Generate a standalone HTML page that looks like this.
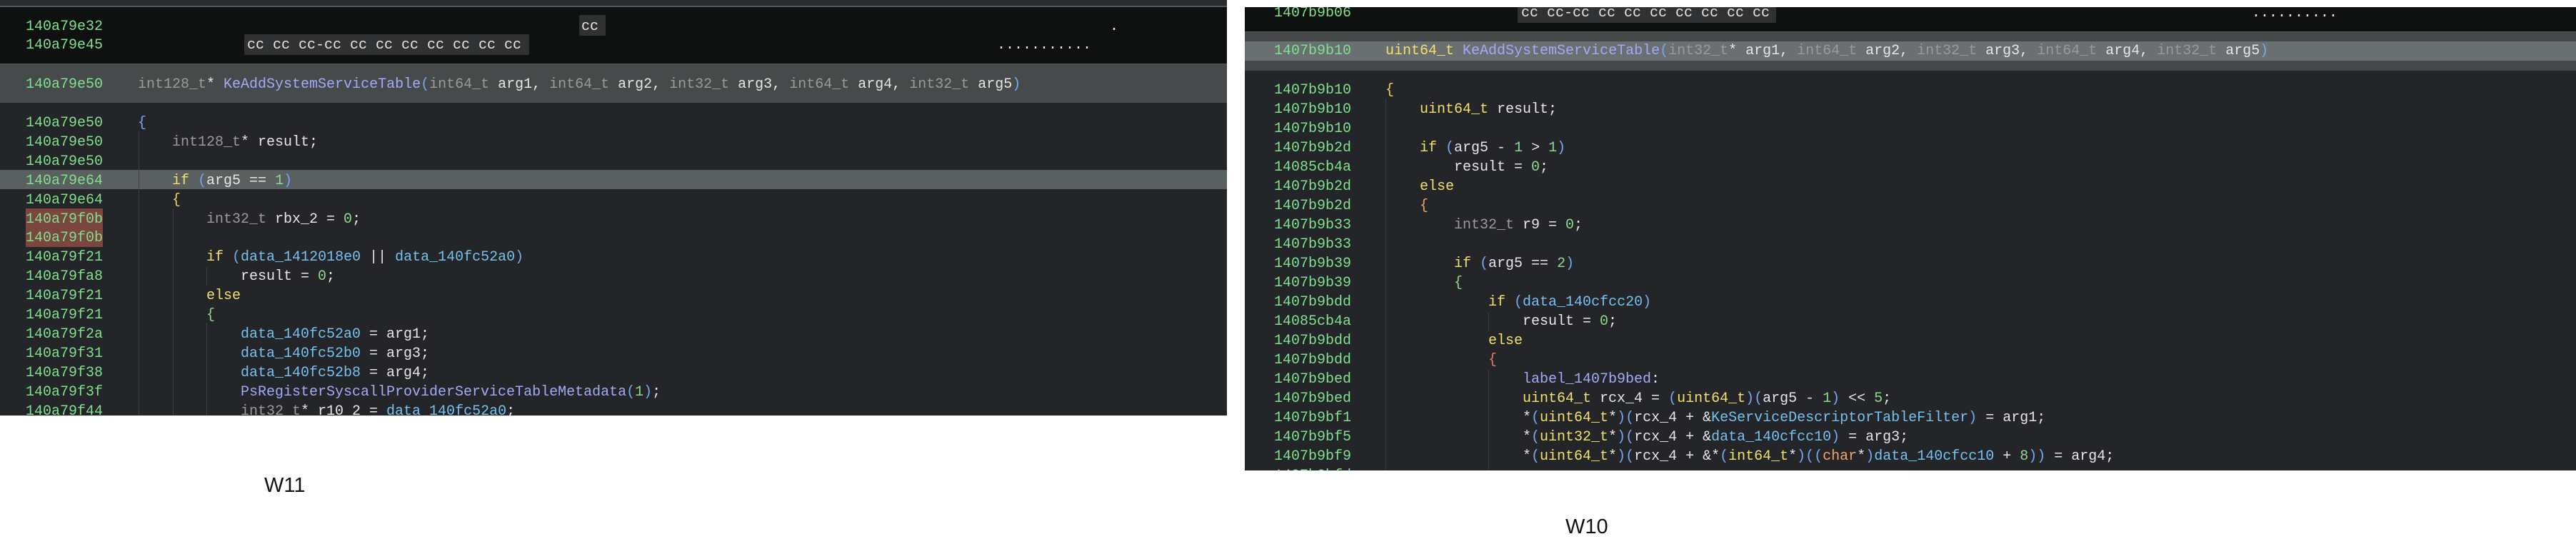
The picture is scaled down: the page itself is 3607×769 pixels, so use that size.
<!DOCTYPE html>
<html><head><meta charset="utf-8"><style>
body{margin:0;width:3607px;height:769px;background:#fff;position:relative;overflow:hidden;font-family:"Liberation Mono",monospace;font-size:20px}
.p{position:absolute;overflow:hidden}
.r{position:absolute;left:0;right:0;height:27px;line-height:27px;white-space:pre}
.a{position:absolute;color:#7fe08d}
.c{position:absolute;color:#e6e6e6}
.t{color:#9a9a9a}.f{color:#a3aaf7}.k{color:#f2e06a}.n{color:#8fd98f}.d{color:#74c2ef}.y{color:#f2e06a}.o{color:#f3a46a}
.b1{color:#74a8ef}.b2{color:#f2d06a}.b3{color:#8fd98f}.b4{color:#e8776a}
.g{position:absolute;width:1px;background:#3c3e42}
.box{position:absolute;background:#2f3133;border-radius:2px}
.lab{position:absolute;font-family:"Liberation Sans",sans-serif;font-size:29px;color:#111}
</style></head><body>

<!-- LEFT PANEL -->
<div class="p" style="left:0;top:0;width:1718px;height:582px;background:#242528">
 <div style="position:absolute;left:0;top:0;right:0;height:8px;background:#2a2b2e"></div>
 <div style="position:absolute;left:0;top:8px;right:0;height:2px;background:#55585a"></div>
 <div style="position:absolute;left:0;top:10px;right:0;height:79px;background:#0f1110"></div>
 <div style="position:absolute;left:0;top:89px;right:0;height:55px;background:#474a4b"></div>
 <div style="position:absolute;left:0;top:89px;right:0;height:1px;background:#5a5d5e"></div>
 <div style="position:absolute;left:0;top:238px;right:0;height:27px;background:#5a5f5f"></div>
 <div style="position:absolute;left:36px;top:292px;width:108px;height:54px;background:#7a463f"></div>
 <div class="box" style="left:811px;top:21px;width:37px;height:29px"></div>
 <div class="box" style="left:342px;top:48px;width:399px;height:29px"></div>
 <div class="g" style="left:194px;top:185px;height:400px"></div>
 <div class="g" style="left:242px;top:292px;height:300px"></div>
 <div class="g" style="left:289px;top:374px;height:26px"></div>
 <div class="g" style="left:289px;top:452px;height:140px"></div>

 <div class="r" style="top:24px"><span class="a" style="left:36px">140a79e32</span><span class="c" style="left:814px">cc</span><span class="c" style="left:1554px">.</span></div>
 <div class="r" style="top:50px"><span class="a" style="left:36px">140a79e45</span><span class="c" style="left:346px">cc cc cc-cc cc cc cc cc cc cc cc</span><span class="c" style="left:1396px">...........</span></div>
 <div class="r" style="top:105px"><span class="a" style="left:36px">140a79e50</span><span class="c" style="left:193px"><span class="t">int128_t</span>* <span class="f">KeAddSystemServiceTable</span><span class="b1">(</span><span class="t">int64_t</span> arg1, <span class="t">int64_t</span> arg2, <span class="t">int32_t</span> arg3, <span class="t">int64_t</span> arg4, <span class="t">int32_t</span> arg5<span class="b1">)</span></span></div>

 <div class="r" style="top:159px"><span class="a" style="left:36px">140a79e50</span><span class="c" style="left:193px"><span class="b1">{</span></span></div>
 <div class="r" style="top:186px"><span class="a" style="left:36px">140a79e50</span><span class="c" style="left:241px"><span class="t">int128_t</span>* result;</span></div>
 <div class="r" style="top:213px"><span class="a" style="left:36px">140a79e50</span></div>
 <div class="r" style="top:240px"><span class="a" style="left:36px">140a79e64</span><span class="c" style="left:241px"><span class="k">if</span> <span class="b1">(</span>arg5 == <span class="n">1</span><span class="b1">)</span></span></div>
 <div class="r" style="top:267px"><span class="a" style="left:36px">140a79e64</span><span class="c" style="left:241px"><span class="b2">{</span></span></div>
 <div class="r" style="top:294px"><span class="a" style="left:36px">140a79f0b</span><span class="c" style="left:289px"><span class="t">int32_t</span> rbx_2 = <span class="n">0</span>;</span></div>
 <div class="r" style="top:320px"><span class="a" style="left:36px">140a79f0b</span></div>
 <div class="r" style="top:347px"><span class="a" style="left:36px">140a79f21</span><span class="c" style="left:289px"><span class="k">if</span> <span class="b1">(</span><span class="d">data_1412018e0</span> || <span class="d">data_140fc52a0</span><span class="b1">)</span></span></div>
 <div class="r" style="top:374px"><span class="a" style="left:36px">140a79fa8</span><span class="c" style="left:337px">result = <span class="n">0</span>;</span></div>
 <div class="r" style="top:401px"><span class="a" style="left:36px">140a79f21</span><span class="c" style="left:289px"><span class="k">else</span></span></div>
 <div class="r" style="top:428px"><span class="a" style="left:36px">140a79f21</span><span class="c" style="left:289px"><span class="b3">{</span></span></div>
 <div class="r" style="top:455px"><span class="a" style="left:36px">140a79f2a</span><span class="c" style="left:337px"><span class="d">data_140fc52a0</span> = arg1;</span></div>
 <div class="r" style="top:482px"><span class="a" style="left:36px">140a79f31</span><span class="c" style="left:337px"><span class="d">data_140fc52b0</span> = arg3;</span></div>
 <div class="r" style="top:509px"><span class="a" style="left:36px">140a79f38</span><span class="c" style="left:337px"><span class="d">data_140fc52b8</span> = arg4;</span></div>
 <div class="r" style="top:536px"><span class="a" style="left:36px">140a79f3f</span><span class="c" style="left:337px"><span class="f">PsRegisterSyscallProviderServiceTableMetadata</span><span class="b1">(</span><span class="n">1</span><span class="b1">)</span>;</span></div>
 <div class="r" style="top:563px"><span class="a" style="left:36px">140a79f44</span><span class="c" style="left:337px"><span class="t">int32_t</span>* r10_2 = <span class="d">data_140fc52a0</span>;</span></div>
</div>
<div class="lab" style="left:370px;top:664px">W11</div>

<!-- RIGHT PANEL -->
<div class="p" style="left:1743px;top:10px;width:1864px;height:649px;background:#242528">
 <div style="position:absolute;left:0;top:0;right:0;height:34px;background:#0f1110"></div>
 <div style="position:absolute;left:0;top:34px;right:0;height:55px;background:#454849"></div>
 <div style="position:absolute;left:0;top:34px;right:0;height:1px;background:#5a5d5e"></div>
 <div style="position:absolute;left:0;top:48px;right:0;height:27px;background:#6a6f71"></div>
 <div class="box" style="left:382px;top:0;width:362px;height:22px"></div>
 <div class="g" style="left:197px;top:128px;height:540px"></div>
 <div class="g" style="left:341px;top:428px;height:26px"></div>
 <div class="g" style="left:341px;top:508px;height:150px"></div>
</div>
<div class="p" style="left:1743px;top:10px;width:1864px;height:649px">
 <div class="r" style="top:-5px"><span class="a" style="left:41px">1407b9b06</span><span class="c" style="left:387px">cc cc-cc cc cc cc cc cc cc cc</span><span class="c" style="left:1410px">..........</span></div>
 <div class="r" style="top:48px"><span class="a" style="left:41px">1407b9b10</span><span class="c" style="left:197px"><span class="y">uint64_t</span> <span class="f">KeAddSystemServiceTable</span><span class="b1">(</span><span class="t">int32_t</span>* arg1, <span class="t">int64_t</span> arg2, <span class="t">int32_t</span> arg3, <span class="t">int64_t</span> arg4, <span class="t">int32_t</span> arg5<span class="b1">)</span></span></div>
</div>
<div class="p" style="left:1743px;top:0;width:1864px;height:659px">
 <div class="r" style="top:113px"><span class="a" style="left:41px">1407b9b10</span><span class="c" style="left:197px"><span class="b2">{</span></span></div>
 <div class="r" style="top:140px"><span class="a" style="left:41px">1407b9b10</span><span class="c" style="left:245px"><span class="y">uint64_t</span> result;</span></div>
 <div class="r" style="top:167px"><span class="a" style="left:41px">1407b9b10</span></div>
 <div class="r" style="top:194px"><span class="a" style="left:41px">1407b9b2d</span><span class="c" style="left:245px"><span class="k">if</span> <span class="b1">(</span>arg5 - <span class="n">1</span> &gt; <span class="n">1</span><span class="b1">)</span></span></div>
 <div class="r" style="top:221px"><span class="a" style="left:41px">14085cb4a</span><span class="c" style="left:293px">result = <span class="n">0</span>;</span></div>
 <div class="r" style="top:248px"><span class="a" style="left:41px">1407b9b2d</span><span class="c" style="left:245px"><span class="k">else</span></span></div>
 <div class="r" style="top:275px"><span class="a" style="left:41px">1407b9b2d</span><span class="c" style="left:245px"><span class="o">{</span></span></div>
 <div class="r" style="top:302px"><span class="a" style="left:41px">1407b9b33</span><span class="c" style="left:293px"><span class="t">int32_t</span> r9 = <span class="n">0</span>;</span></div>
 <div class="r" style="top:329px"><span class="a" style="left:41px">1407b9b33</span></div>
 <div class="r" style="top:356px"><span class="a" style="left:41px">1407b9b39</span><span class="c" style="left:293px"><span class="k">if</span> <span class="b1">(</span>arg5 == <span class="n">2</span><span class="b1">)</span></span></div>
 <div class="r" style="top:383px"><span class="a" style="left:41px">1407b9b39</span><span class="c" style="left:293px"><span class="b3">{</span></span></div>
 <div class="r" style="top:410px"><span class="a" style="left:41px">1407b9bdd</span><span class="c" style="left:341px"><span class="k">if</span> <span class="b1">(</span><span class="d">data_140cfcc20</span><span class="b1">)</span></span></div>
 <div class="r" style="top:437px"><span class="a" style="left:41px">14085cb4a</span><span class="c" style="left:389px">result = <span class="n">0</span>;</span></div>
 <div class="r" style="top:464px"><span class="a" style="left:41px">1407b9bdd</span><span class="c" style="left:341px"><span class="k">else</span></span></div>
 <div class="r" style="top:491px"><span class="a" style="left:41px">1407b9bdd</span><span class="c" style="left:341px"><span class="b4">{</span></span></div>
 <div class="r" style="top:518px"><span class="a" style="left:41px">1407b9bed</span><span class="c" style="left:389px"><span class="f">label_1407b9bed</span>:</span></div>
 <div class="r" style="top:545px"><span class="a" style="left:41px">1407b9bed</span><span class="c" style="left:389px"><span class="y">uint64_t</span> rcx_4 = <span class="b1">(</span><span class="y">uint64_t</span><span class="b1">)(</span>arg5 - <span class="n">1</span><span class="b1">)</span> &lt;&lt; <span class="n">5</span>;</span></div>
 <div class="r" style="top:572px"><span class="a" style="left:41px">1407b9bf1</span><span class="c" style="left:389px">*<span class="b1">(</span><span class="y">uint64_t</span>*<span class="b1">)(</span>rcx_4 + &amp;<span class="d">KeServiceDescriptorTableFilter</span><span class="b1">)</span> = arg1;</span></div>
 <div class="r" style="top:599px"><span class="a" style="left:41px">1407b9bf5</span><span class="c" style="left:389px">*<span class="b1">(</span><span class="y">uint32_t</span>*<span class="b1">)(</span>rcx_4 + &amp;<span class="d">data_140cfcc10</span><span class="b1">)</span> = arg3;</span></div>
 <div class="r" style="top:626px"><span class="a" style="left:41px">1407b9bf9</span><span class="c" style="left:389px">*<span class="b1">(</span><span class="y">uint64_t</span>*<span class="b1">)(</span>rcx_4 + &amp;*<span class="b1">(</span><span class="y">int64_t</span>*<span class="b1">)((</span><span class="o">char</span>*<span class="b1">)</span><span class="d">data_140cfcc10</span> + <span class="n">8</span><span class="b1">))</span> = arg4;</span></div>
 <div class="r" style="top:653px"><span class="a" style="left:41px">1407b9bfd</span></div>
</div>
<div class="lab" style="left:2192px;top:722px">W10</div>
</body></html>
